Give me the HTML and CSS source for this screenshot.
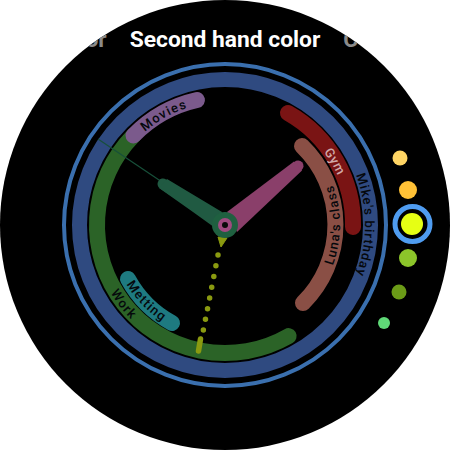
FILE: index.html
```html
<!DOCTYPE html>
<html>
<head>
  <link rel="stylesheet" href="styles.css">
</head>
<body>
  <div class="watch">
    <div class="titles">
      <span class="title-side title-left"><span>Minute hand color</span></span>
      <span class="title-main">Second hand color</span>
      <span class="title-side title-right"><span>Color</span></span>
    </div>
    <svg class="face" width="450" height="450" viewBox="0 0 450 450">
      <defs>
        <path id="moviesPath" d="M 115.3 159.1 A 128 128 0 0 1 227.2 97"/>
        <path id="gymPath" d="M 307.3 127 A 128 128 0 0 1 351 202.8"/>
        <path id="mikePath" d="M 350.6 152.5 A 145 145 0 0 1 350.6 297.5"/>
        <path id="lunaPath" d="M 309.3 295.7 A 110 110 0 0 0 309.3 154.3"/>
        <path id="workPath" d="M 98.2 242.8 A 128 128 0 0 0 177 343.7"/>
        <path id="mettingPath" d="M 118.3 251.6 A 110 110 0 0 0 194.7 330.7"/>
      </defs>

      <circle class="ring-outer" cx="225" cy="225" r="161"/>
      <circle class="ring-blue" cx="225" cy="225" r="145.5"/>

      <path class="arc arc-work" d="M 288.6 336.1 A 128 128 0 0 1 133.5 135.5"/>
      <path class="arc arc-movies" d="M 133.5 135.5 A 128 128 0 0 1 197 100"/>
      <path class="arc arc-gym" d="M 288 113 A 128 128 0 0 1 353 227"/>
      <path class="arc arc-luna" d="M 302 146 A 110 110 0 0 1 303 303"/>
      <path class="arc arc-metting" d="M 128 279 A 111 111 0 0 0 172 323"/>

      <text class="label label-wide"><textPath href="#moviesPath" startOffset="50%">Movies</textPath></text>
      <text class="label label-light"><textPath href="#gymPath" startOffset="50%">Gym</textPath></text>
      <text class="label label-mid"><textPath href="#mikePath" startOffset="50%">Mike's birthday</textPath></text>
      <text class="label"><textPath href="#lunaPath" startOffset="50%">Luna's class</textPath></text>
      <text class="label"><textPath href="#workPath" startOffset="50%">Work</textPath></text>
      <text class="label"><textPath href="#mettingPath" startOffset="50%">Metting</textPath></text>

      <!-- second hand -->
      <path class="second-stub" d="M 218 237 L 227 238 L 221 247 Z"/>
      <line class="second-dots" x1="218" y1="255" x2="203" y2="332"/>
      <line class="second-bar" x1="200.5" y1="339" x2="198.5" y2="351"/>

      <!-- minute hand -->
      <line class="minute-line" x1="98" y1="139" x2="165" y2="184"/>
      <path class="minute-shadow" d="M 172 192 L 196 204 L 205 220 Z"/>
      <line class="minute-tip" x1="163" y1="184" x2="172" y2="190"/>
      <path class="minute-hand" d="M 167 179 L 222 212 L 218 230 L 193 212 L 159 188 Z"/>

      <!-- hour hand -->
      <line class="hour-tip" x1="298" y1="166" x2="288" y2="175"/>
      <path class="hour-hand" d="M 294 161.5 L 227 212 L 237 232 L 302 170.5 Z"/>

      <circle class="hub-green" cx="225" cy="225" r="13"/>
      <circle class="hub-pink" cx="225" cy="225" r="7"/>
      <circle class="hub-hole" cx="225" cy="225" r="3"/>

      <!-- colour picker -->
      <circle class="swatch-ring" cx="412.5" cy="224" r="17.5"/>
      <circle cx="400" cy="158" r="7.5" fill="#ffd564"/>
      <circle cx="408" cy="190" r="9" fill="#ffc136"/>
      <circle cx="412" cy="224" r="11" fill="#e6ff14"/>
      <circle cx="408" cy="258" r="9" fill="#8cc52a"/>
      <circle cx="399" cy="292" r="7.5" fill="#6b9b17"/>
      <circle cx="384" cy="323" r="6" fill="#5fd977"/>
    </svg>
  </div>
</body>
</html>
```
FILE: styles.css
```css
body {
  margin: 0;
  background: #fff;
}
.watch {
  position: relative;
  width: 450px;
  height: 450px;
  border-radius: 50%;
  background: #000;
  overflow: hidden;
}
.titles {
  display: flex;
  align-items: center;
  justify-content: center;
  gap: 23px;
  padding-top: 27px;
  font-family: Roboto, sans-serif;
  font-size: 22.8px;
  font-weight: 700;
  line-height: 26px;
  white-space: nowrap;
}
.title-main {
  color: #fff;
}
.title-side {
  flex: 1;
  display: flex;
  overflow: hidden;
  color: #8a8a8a;
}
.title-left {
  justify-content: flex-end;
}
.face {
  position: absolute;
  top: 0;
  left: 0;
}
.ring-outer {
  fill: none;
  stroke: #3a6fae;
  stroke-width: 4;
}
.ring-blue {
  fill: none;
  stroke: #2f4a80;
  stroke-width: 15;
}
.arc {
  fill: none;
  stroke-width: 16;
  stroke-linecap: round;
}
.arc-work { stroke: #2b6327; }
.arc-movies { stroke: #7b5a8c; }
.arc-gym { stroke: #7a1414; }
.arc-luna { stroke: #8a4f45; }
.arc-metting { stroke: #1e7a80; }
.label {
  font-family: Roboto, sans-serif;
  font-size: 13px;
  font-weight: 500;
  letter-spacing: 0.8px;
  text-anchor: middle;
  fill: #05080c;
  dominant-baseline: central;
}
.label-wide {
  letter-spacing: 1.6px;
}
.label-mid {
  letter-spacing: 1.2px;
}
.label-light {
  fill: #d0a8a8;
}
.second-stub {
  fill: #8a9a10;
  stroke: #8a9a10;
  stroke-width: 1;
  stroke-linejoin: round;
}
.second-dots {
  stroke: #8a9a10;
  stroke-width: 5.5;
  stroke-linecap: round;
  stroke-dasharray: 0 10.93;
}
.second-bar {
  stroke: #8a9a10;
  stroke-width: 5.5;
  stroke-linecap: round;
}
.minute-line {
  stroke: #17503a;
  stroke-width: 1.2;
}
.minute-hand { fill: #205a42; }
.minute-shadow { fill: #1a4630; }
.minute-tip {
  stroke: #205a42;
  stroke-width: 11;
  stroke-linecap: round;
}
.hour-hand { fill: #8a3f6a; }
.hour-tip {
  stroke: #8a3f6a;
  stroke-width: 11;
  stroke-linecap: round;
}
.hub-green { fill: #1f6040; }
.hub-pink { fill: #a04a80; }
.hub-hole { fill: #0a0a0a; }
.swatch-ring {
  fill: none;
  stroke: #4f9cf0;
  stroke-width: 5;
}
```
